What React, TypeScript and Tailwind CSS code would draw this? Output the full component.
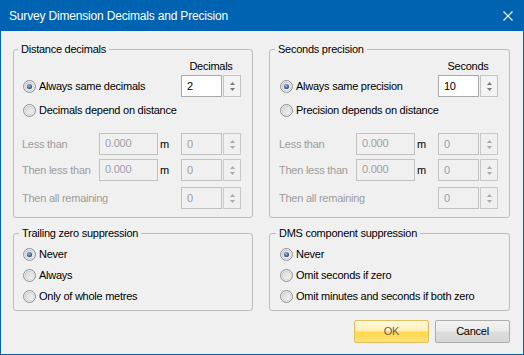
import React from 'react';
import clsx from 'clsx';

function Radio({ label, checked }: { label: string; checked?: boolean }) {
  return (
    <div className="flex h-[16px] items-center gap-[3px] whitespace-nowrap">
      <svg width="13" height="13" viewBox="0 0 13 13" className="shrink-0">
        <defs>
          <linearGradient id="rg" x1="0" y1="0" x2="1" y2="1">
            <stop offset="0" stopColor="#d4d4d4" />
            <stop offset="1" stopColor="#f7f7f7" />
          </linearGradient>
          <radialGradient id="dot" cx="0.4" cy="0.35" r="0.7">
            <stop offset="0" stopColor="#8fb1de" />
            <stop offset="1" stopColor="#2a4d80" />
          </radialGradient>
        </defs>
        <circle cx="6.5" cy="6.5" r="6" fill="#f4f4f4" stroke="#8e8f8f" />
        <circle cx="6.5" cy="6.5" r="4.5" fill="url(#rg)" stroke="#c9c9c9" strokeWidth="0.8" />
        {checked && <circle cx="6.5" cy="6.5" r="2.6" fill="url(#dot)" />}
      </svg>
      <span>{label}</span>
    </div>
  );
}

function Spinner({ value, disabled }: { value: string; disabled?: boolean }) {
  return (
    <div className="flex h-[22px] w-[60px] gap-[1px]">
      <div
        className={clsx(
          'flex w-[41px] items-center border pl-[5px]',
          disabled ? 'border-[#c2c2c2] bg-[#f0f0f0] text-[#9d9da8]' : 'border-[#a9a9a9] bg-white text-black'
        )}
      >
        {value}
      </div>
      <div
        className={clsx(
          'flex w-[18px] flex-col items-center justify-between border pt-[6px] pb-[5px]',
          disabled ? 'border-[#c9c9c9] bg-[#f0f0f0]' : 'border-[#c4c4c4] bg-[#f3f3f3]'
        )}
      >
        <svg width="5" height="3" viewBox="0 0 5 3">
          <path d="M0 3 L2.5 0 L5 3 Z" fill={disabled ? '#a9a9a9' : '#7a7a7a'} />
        </svg>
        <svg width="5" height="3" viewBox="0 0 5 3">
          <path d="M0 0 L5 0 L2.5 3 Z" fill={disabled ? '#a9a9a9' : '#7a7a7a'} />
        </svg>
      </div>
    </div>
  );
}

function Group({ title, className, children }: { title: string; className?: string; children: React.ReactNode }) {
  return (
    <fieldset className={clsx('rounded-[3px] border border-[#bcbcbc]', className)}>
      <legend className="-ml-[4px] px-[3px] leading-[14px]">{title}</legend>
      {children}
    </fieldset>
  );
}

function RangeRows() {
  const rows = [
    { label: 'Less than', box: true, mt: 'mt-[15px]' },
    { label: 'Then less than', box: true, mt: 'mt-[4px]' },
    { label: 'Then all remaining', box: false, mt: 'mt-[6px]' },
  ];
  return (
    <>
      {rows.map((r) => (
        <div key={r.label} className={clsx('grid h-[22px] grid-cols-[77px_59px_23px_60px] items-center', r.mt)}>
          <span className="whitespace-nowrap text-[#9d9d9d]">{r.label}</span>
          {r.box ? (
            <div className="flex h-[22px] items-center border border-[#c2c2c2] pb-[2px] pl-[5px] text-[#9d9da8]">0.000</div>
          ) : (
            <span />
          )}
          <span className="pl-[2px]">{r.box ? 'm' : ''}</span>
          <Spinner value="0" disabled />
        </div>
      ))}
    </>
  );
}

function TopGroup({
  title,
  unit,
  first,
  second,
  value,
  pad,
}: {
  title: string;
  unit: string;
  first: string;
  second: string;
  value: string;
  pad: string;
}) {
  return (
    <Group title={title} className={clsx('pr-[11px] pb-[8px]', pad)}>
      <div className="grid grid-cols-[1fr_60px] pt-[3px]">
        <span />
        <span className="text-center leading-[14px]">{unit}</span>
      </div>
      <div className="mt-[2px] flex items-center justify-between">
        <div className="ml-[1px]">
          <Radio label={first} checked />
        </div>
        <Spinner value={value} />
      </div>
      <div className="mt-[5px] ml-[1px]">
        <Radio label={second} />
      </div>
      <RangeRows />
    </Group>
  );
}

function BottomGroup({ title, options, pad }: { title: string; options: string[]; pad: string }) {
  return (
    <Group title={title} className={clsx('pb-[6px]', pad)}>
      <div className="mt-[6px] flex flex-col gap-[5px]">
        {options.map((o, i) => (
          <Radio key={o} label={o} checked={i === 0} />
        ))}
      </div>
    </Group>
  );
}

export default function App(): React.ReactElement {
  return (
    <div className="flex h-[355px] w-[524px] flex-col border-x border-b border-[#0063b1] bg-[#f0f0f0] font-['Liberation_Sans',Arial,sans-serif] text-[11px] tracking-[-0.25px] text-black">
      <div className="-mx-px flex h-[31px] shrink-0 items-center justify-between bg-[#0063b1] pr-[11px] pl-[9px] text-white">
        <span className="text-[12px] tracking-[-0.18px]">Survey Dimension Decimals and Precision</span>
        <svg width="10" height="10" viewBox="0 0 10 10">
          <path d="M0.5 0.5 L9.5 9.5 M9.5 0.5 L0.5 9.5" stroke="white" strokeWidth="1.1" />
        </svg>
      </div>
      <div className="mt-[11px] grid grid-cols-[240px_241px] gap-x-[16px] gap-y-[8px] pr-[13px] pl-[12px] leading-[16px]">
        <TopGroup
          title="Distance decimals"
          unit="Decimals"
          first="Always same decimals"
          second="Decimals depend on distance"
          value="2"
          pad="pl-[8px]"
        />
        <TopGroup
          title="Seconds precision"
          unit="Seconds"
          first="Always same precision"
          second="Precision depends on distance"
          value="10"
          pad="pl-[9px]"
        />
        <BottomGroup
          title="Trailing zero suppression"
          options={['Never', 'Always', 'Only of whole metres']}
          pad="pl-[9px]"
        />
        <BottomGroup
          title="DMS component suppression"
          options={['Never', 'Omit seconds if zero', 'Omit minutes and seconds if both zero']}
          pad="pl-[10px]"
        />
      </div>
      <div className="mt-[9px] flex justify-end gap-[6px] pr-[13px]">
        <button className="h-[23px] w-[75px] rounded-[2px] border border-[#e3bd5c] bg-[linear-gradient(#fff9e0,#fff0b8_45%,#ffd84a_55%,#ffe27a)] text-[#5f5f5f]">
          OK
        </button>
        <button className="h-[23px] w-[75px] rounded-[2px] border border-[#adadad] bg-[linear-gradient(#f3f3f3,#ebebeb_45%,#dddddd_55%,#d6d6d6)]">
          Cancel
        </button>
      </div>
    </div>
  );
}
